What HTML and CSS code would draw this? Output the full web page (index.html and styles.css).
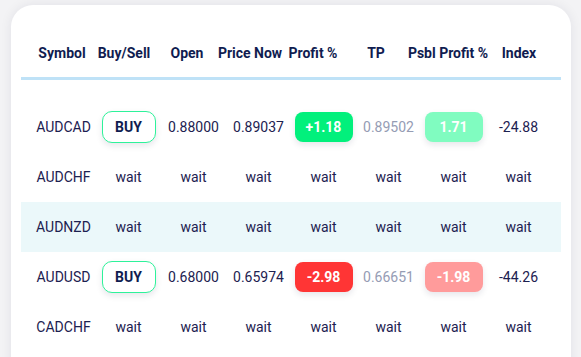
FILE: index.html
```html
<!DOCTYPE html>
<html>
<head>
<meta charset="utf-8">
<link rel="stylesheet" href="styles.css">
</head>
<body>
<div class="card">
  <div class="thead">
    <div class="th">Symbol</div>
    <div class="th">Buy/Sell</div>
    <div class="th">Open</div>
    <div class="th">Price Now</div>
    <div class="th">Profit %</div>
    <div class="th">TP</div>
    <div class="th">Psbl Profit %</div>
    <div class="th">Index</div>
  </div>
  <div class="tbody">
    <div class="row">
      <div class="td">AUDCAD</div>
      <div class="td"><span class="buy">BUY</span></div>
      <div class="td">0.88000</div>
      <div class="td">0.89037</div>
      <div class="td"><span class="badge green">+1.18</span></div>
      <div class="td muted">0.89502</div>
      <div class="td"><span class="badge lightgreen">1.71</span></div>
      <div class="td">-24.88</div>
    </div>
    <div class="row">
      <div class="td">AUDCHF</div>
      <div class="td">wait</div>
      <div class="td">wait</div>
      <div class="td">wait</div>
      <div class="td">wait</div>
      <div class="td">wait</div>
      <div class="td">wait</div>
      <div class="td">wait</div>
    </div>
    <div class="row hl">
      <div class="td">AUDNZD</div>
      <div class="td">wait</div>
      <div class="td">wait</div>
      <div class="td">wait</div>
      <div class="td">wait</div>
      <div class="td">wait</div>
      <div class="td">wait</div>
      <div class="td">wait</div>
    </div>
    <div class="row">
      <div class="td">AUDUSD</div>
      <div class="td"><span class="buy">BUY</span></div>
      <div class="td">0.68000</div>
      <div class="td">0.65974</div>
      <div class="td"><span class="badge red">-2.98</span></div>
      <div class="td muted">0.66651</div>
      <div class="td"><span class="badge lightred">-1.98</span></div>
      <div class="td">-44.26</div>
    </div>
    <div class="row">
      <div class="td">CADCHF</div>
      <div class="td">wait</div>
      <div class="td">wait</div>
      <div class="td">wait</div>
      <div class="td">wait</div>
      <div class="td">wait</div>
      <div class="td">wait</div>
      <div class="td">wait</div>
    </div>
  </div>
</div>
</body>
</html>
```
FILE: styles.css
```css
html, body {
  margin: 0;
  padding: 0;
  background: #f3f3f5;
  overflow: hidden;
}
body {
  font-family: Roboto, "Liberation Sans", sans-serif;
  font-size: 14px;
  color: #1c2150;
}
.card {
  margin: 5px 0 0 11px;
  width: 540px;
  padding: 23px 10px 40px;
  background: #fff;
  border-radius: 22px;
  box-shadow: 0 0 12px rgba(20, 20, 60, 0.08);
}
.thead {
  display: grid;
  grid-template-columns: 62px 62px 64px 62px 64px 62px 82px 60px;
  height: 49px;
  padding: 0 10px;
  border-bottom: 3px solid #bfe2f7;
}
.th {
  display: flex;
  align-items: center;
  justify-content: center;
  white-space: nowrap;
  font-weight: 700;
  color: #101c50;
  line-height: 20px;
}
.tbody {
  padding-top: 22px;
}
.row {
  display: grid;
  grid-template-columns: repeat(8, 65px);
  height: 50px;
  padding: 0 10px;
}
.row.hl {
  background: #ebf8fa;
}
.td {
  display: flex;
  align-items: center;
  justify-content: center;
  white-space: nowrap;
  line-height: 20px;
}
.muted {
  color: #959cb4;
}
.buy {
  box-sizing: border-box;
  width: 54px;
  height: 32px;
  display: flex;
  align-items: center;
  justify-content: center;
  border: 1.5px solid #2ef29a;
  border-radius: 10px;
  background: #fff;
  font-weight: 700;
  color: #101c50;
  box-shadow: 0 3px 6px rgba(20, 20, 60, 0.1);
}
.badge {
  width: 58px;
  height: 30px;
  display: flex;
  align-items: center;
  justify-content: center;
  border-radius: 8px;
  font-weight: 700;
  color: #fff;
  box-shadow: 0 3px 6px rgba(20, 20, 60, 0.1);
}
.green { background: #02f07c; }
.lightgreen { background: #80fcc0; }
.red { background: #ff3535; }
.lightred { background: #ff9b9b; }
```
